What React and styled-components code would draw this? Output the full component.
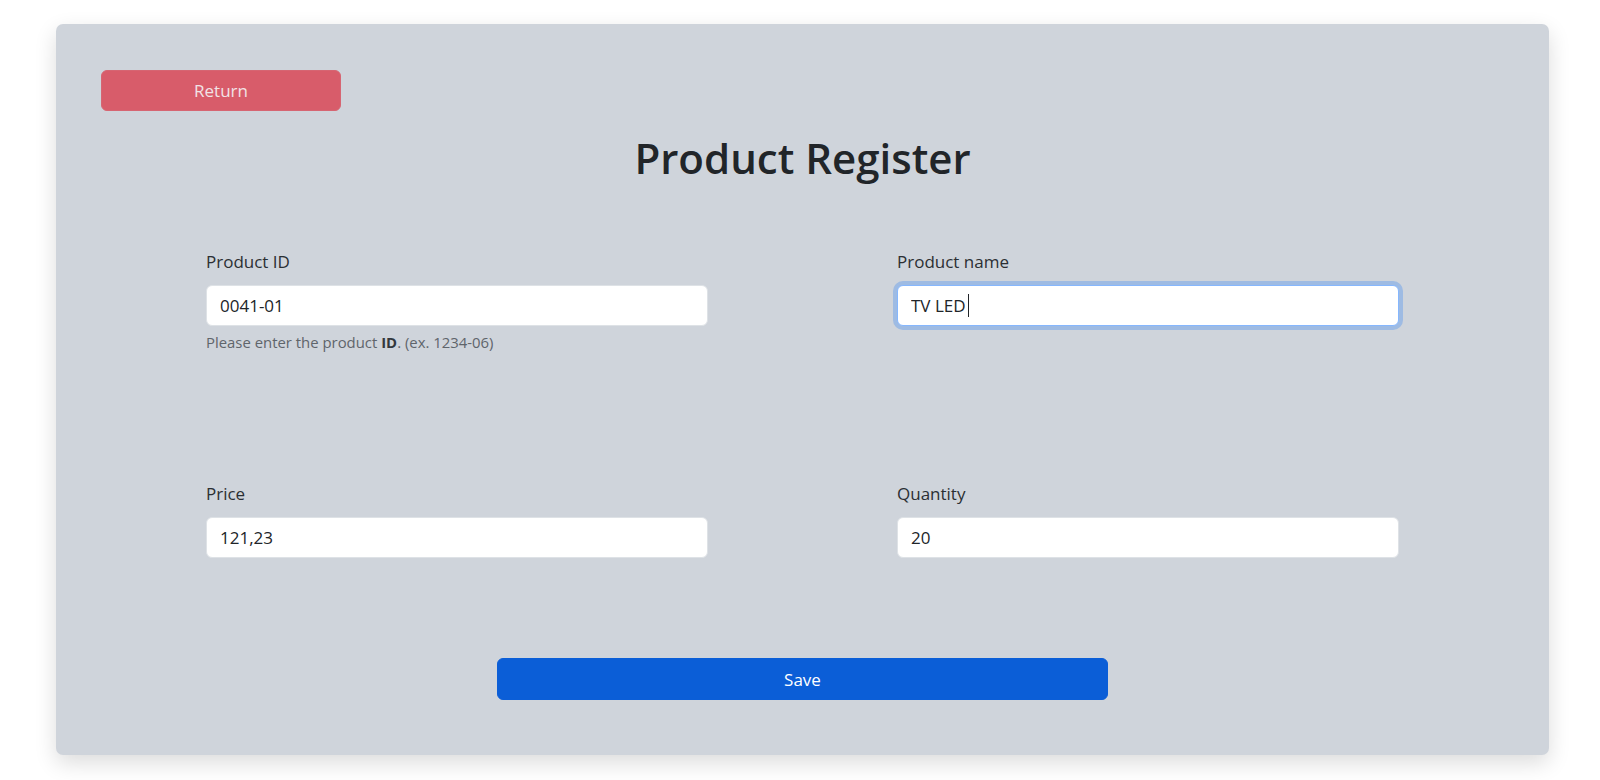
import React from "react"
import styled, { createGlobalStyle, css } from "styled-components"

const GlobalStyle = createGlobalStyle`
  html, body {
    margin: 0;
    padding: 0;
    background: #ffffff;
    font-family: "Open Sans", "Noto Sans", sans-serif;
    color: #212529;
  }
  * {
    box-sizing: border-box;
  }
`

const Page = styled.div`
  padding: 24px 51px 25px 56px;
`

const Card = styled.div`
  background: #cfd4db;
  border-radius: 7px;
  box-shadow: 0 8px 22px rgba(0, 0, 0, 0.14);
  padding: 46px 45px 55px;
  display: flex;
  flex-direction: column;
`

const ReturnButton = styled.button`
  align-self: flex-start;
  width: 240px;
  height: 41px;
  border: 1px solid #d9404f;
  border-radius: 6px;
  background: #dc3545;
  opacity: 0.75;
  color: #fde8ea;
  font-family: inherit;
  font-size: 17px;
  cursor: pointer;
`

const Title = styled.h1`
  margin: 19px 0 0;
  text-align: center;
  font-size: 42px;
  font-weight: 600;
  line-height: 55px;
  color: #212529;
`

const FormGrid = styled.div`
  margin: 64px auto 0;
  width: 1193px;
  display: grid;
  grid-template-columns: 502px 502px;
  justify-content: space-between;
  row-gap: 128px;
  align-items: start;
`

const Field = styled.div`
  display: flex;
  flex-direction: column;
`

const Label = styled.label`
  font-size: 17px;
  line-height: 26px;
  margin-bottom: 10px;
  color: #2b2f33;
`

const InputWrap = styled.div`
  position: relative;
`

const Input = styled.input`
  width: 100%;
  height: 41px;
  padding: 0 13px;
  border: 1px solid #dee2e6;
  border-radius: 6px;
  background: #ffffff;
  font-family: inherit;
  font-size: 17px;
  color: #212529;
  outline: none;
  ${p =>
    p.$focused &&
    css`
      border-color: #86b7fe;
      box-shadow: 0 0 0 4px rgba(13, 110, 253, 0.25);
    `}
`

const Caret = styled.span`
  position: absolute;
  top: 9px;
  width: 1px;
  height: 23px;
  background: #212529;
`

const Help = styled.div`
  margin-top: 5px;
  font-size: 14.9px;
  line-height: 22px;
  color: #5f656b;

  b {
    color: #33383d;
  }
`

const Actions = styled.div`
  margin-top: 100px;
  display: flex;
  justify-content: center;
`

const SaveButton = styled.button`
  width: 611px;
  height: 42px;
  border: 1px solid #0b5ed7;
  border-radius: 6px;
  background: #0b5ed7;
  color: #ffffff;
  font-family: inherit;
  font-size: 17px;
  cursor: pointer;
`

export default function App() {
  return (
    <Page>
      <GlobalStyle />
      <Card>
        <ReturnButton>Return</ReturnButton>
        <Title>Product Register</Title>
        <FormGrid>
          <Field>
            <Label>Product ID</Label>
            <Input value="0041-01" readOnly />
            <Help>
              Please enter the product <b>ID</b>. (ex. 1234-06)
            </Help>
          </Field>
          <Field>
            <Label>Product name</Label>
            <InputWrap>
              <Input value="TV LED" readOnly $focused />
              <Caret style={{ left: 71 }} />
            </InputWrap>
          </Field>
          <Field>
            <Label>Price</Label>
            <Input value="121,23" readOnly />
          </Field>
          <Field>
            <Label>Quantity</Label>
            <Input value="20" readOnly />
          </Field>
        </FormGrid>
        <Actions>
          <SaveButton>Save</SaveButton>
        </Actions>
      </Card>
    </Page>
  )
}
